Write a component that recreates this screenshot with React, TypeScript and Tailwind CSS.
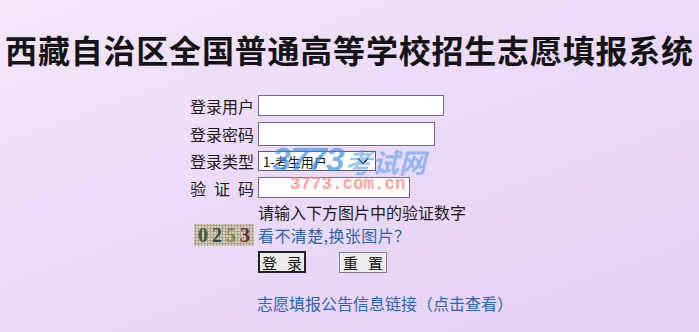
import React from "react";

const cjk = { fontFamily: '"Noto Sans CJK SC", "Noto Sans", sans-serif' };

function Label({ children }: { children: React.ReactNode }) {
  return (
    <div className="w-[64px] mr-[4px] shrink-0 text-[16px] leading-none text-[#1a1a1a] flex justify-end">
      {children}
    </div>
  );
}

export default function App() {
  return (
    <div
      className="relative w-full h-[332px] overflow-hidden bg-[linear-gradient(160deg,#f4e7fc_0%,#ebdaf8_45%,#e5d1f5_100%)]"
      style={cjk}
    >
      <h1 className="pt-[29px] h-[69px] text-center text-[32px] leading-[40px] font-bold tracking-[0.8px] text-[#141414]">
        西藏自治区全国普通高等学校招生志愿填报系统
      </h1>

      <div className="ml-[190px] mt-[26px] flex flex-col">
        <div className="flex items-center h-[21px]">
          <Label>登录用户</Label>
          <div className="w-[186px] h-[21px] bg-white border border-[#726a7c]" />
        </div>
        <div className="flex items-center h-[24px] mt-[6px]">
          <Label>登录密码</Label>
          <div className="w-[177px] h-[24px] bg-white border border-[#726a7c]" />
        </div>
        <div className="flex items-center h-[20px] mt-[5px]">
          <Label>登录类型</Label>
          <div className="w-[118px] h-[20px] bg-white border border-[#5e5a66] flex items-center pl-[4px] pr-[6px] text-[13px] leading-none text-[#111]">
            <span className="flex-1">1-考生用户</span>
            <svg width="12" height="8" viewBox="0 0 12 8" fill="none">
              <path d="M1 1.5 L6 6.5 L11 1.5" stroke="#222" strokeWidth="1.6" />
            </svg>
          </div>
        </div>
        <div className="flex items-center h-[21px] mt-[6px]">
          <Label>
            <span className="w-full flex justify-between">
              <span>验</span>
              <span>证</span>
              <span>码</span>
            </span>
          </Label>
          <div className="w-[152px] h-[21px] bg-white border border-[#726a7c]" />
        </div>
        <div className="flex items-center h-[20px] mt-[4px]">
          <div className="w-[68px] shrink-0" />
          <span className="text-[16px] leading-none text-[#1a1a1a]">请输入下方图片中的验证数字</span>
        </div>
        <div className="flex items-center h-[22px] mt-[2px]">
          <div className="w-[64px] mr-[4px] shrink-0 flex justify-end">
            <div
              className="w-[60px] h-[22px] flex items-center justify-center gap-[4px] bg-[#d6cfc2] bg-[radial-gradient(circle,#ada391_1px,transparent_1.3px)] bg-[length:3px_3px] text-[20px] font-bold leading-none"
              style={{ fontFamily: '"Liberation Serif", serif' }}
            >
              <span className="text-[#3f5f2c]">0</span>
              <span className="text-[#2f4d2f]">2</span>
              <span className="text-[#7a8a40]">5</span>
              <span className="text-[#6a2a34]">3</span>
            </div>
          </div>
          <span className="text-[16px] leading-none tracking-[0.4px] text-[#2b67ad]">看不清楚,换张图片？</span>
        </div>
        <div className="flex items-center h-[22px] mt-[5px]">
          <div className="w-[68px] shrink-0" />
          <div className="w-[48px] h-[22px] border-2 border-[#222] bg-[#ebebeb] flex items-center justify-center gap-[10px] text-[15px] leading-none text-[#111]">
            <span>登</span>
            <span>录</span>
          </div>
          <div className="ml-[33px] w-[48px] h-[21px] border border-[#7d7d7d] bg-[#ededed] flex items-center justify-center gap-[10px] text-[15px] leading-none text-[#111]">
            <span>重</span>
            <span>置</span>
          </div>
        </div>
        <div className="flex items-center h-[18px] mt-[21px]">
          <div className="w-[67px] shrink-0" />
          <span className="text-[16px] leading-none text-[#2b67ad]">志愿填报公告信息链接（点击查看）</span>
        </div>
      </div>

      {/* watermark overlay */}
      <div className="absolute left-[272px] top-[142px] flex items-end pointer-events-none">
        <span
          className="text-[34px] leading-none font-bold italic text-[#3f8fe6]/70 tracking-[-1px]"
          style={{ fontFamily: '"Liberation Sans", sans-serif' }}
        >
          3773
        </span>
        <span className="ml-[1px] mb-[1px] text-[27px] leading-none font-bold italic text-[#5aa0ee]/60">考试网</span>
      </div>
      <div
        className="absolute left-[290px] top-[176px] text-[17.5px] leading-none font-bold text-[#f4877a]/75 pointer-events-none"
        style={{ fontFamily: '"Liberation Mono", monospace' }}
      >
        3773.com.cn
      </div>
    </div>
  );
}
